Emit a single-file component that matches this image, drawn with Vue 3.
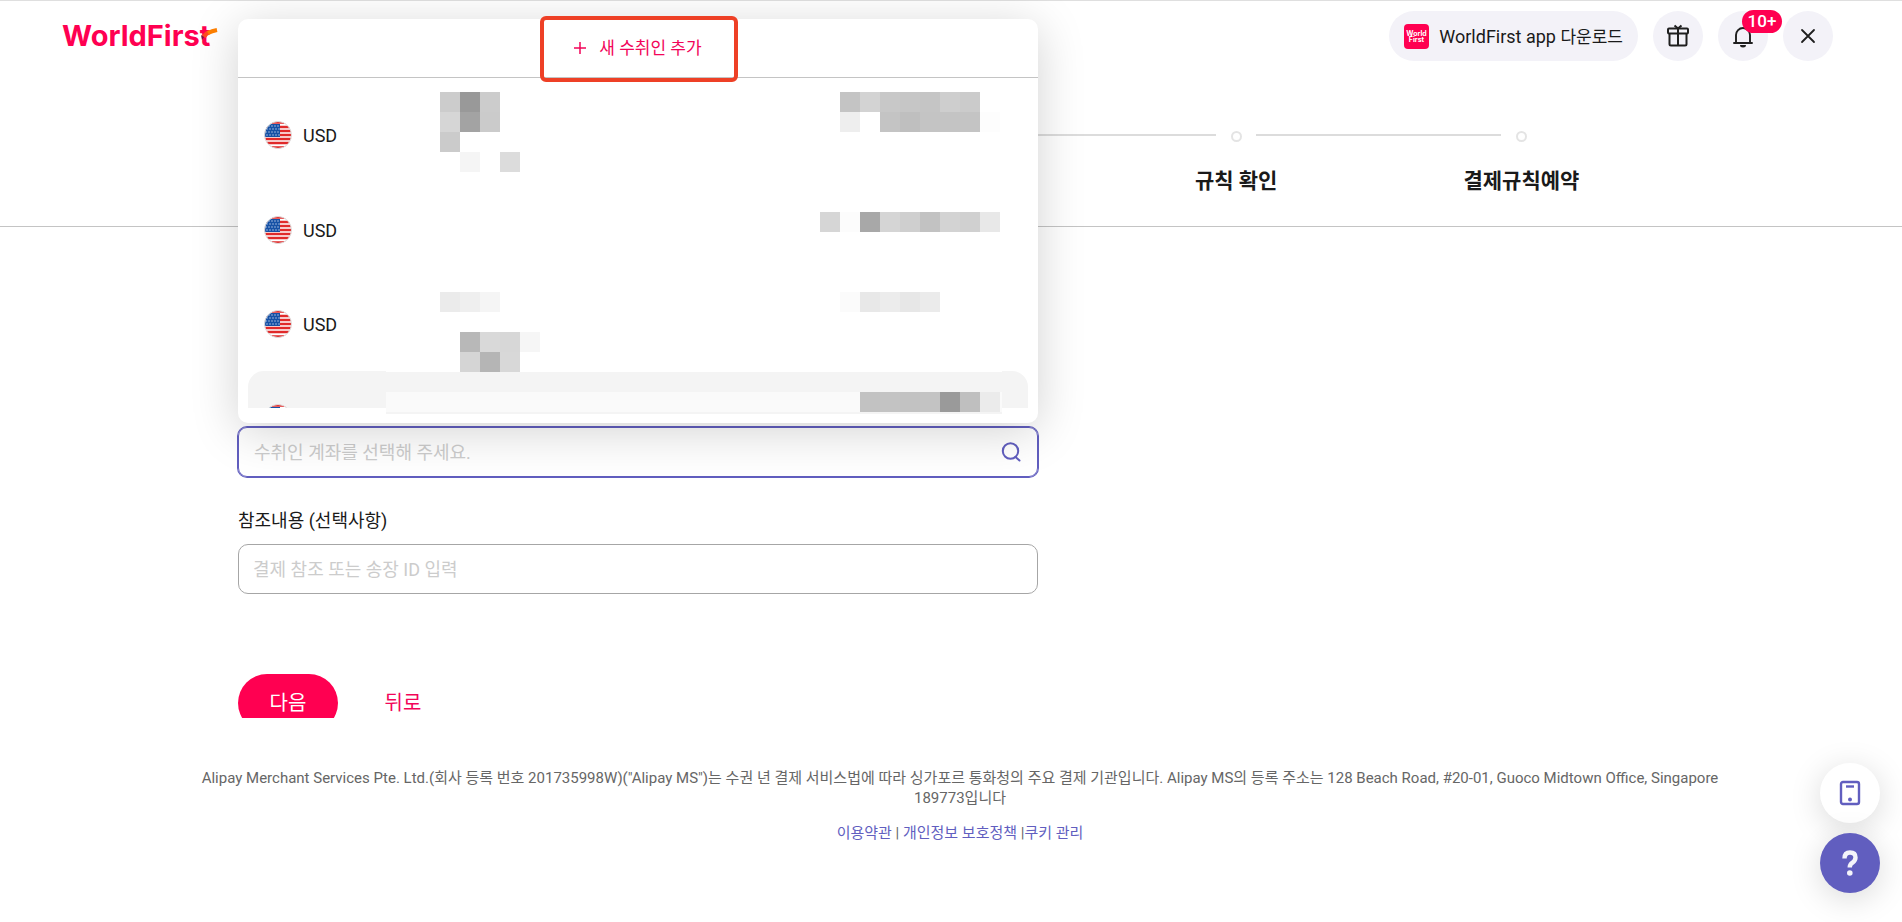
<script setup>
import { ref } from 'vue'

const account = ref('')
const reference = ref('')
const payees = ['USD', 'USD', 'USD', '']

const C = 20
const mask = [
  [440, 92, ['#cccccc', '#999999', '#cccccc']],
  [440, 112, ['#d6d6d6', '#a3a3a3', '#cbcbcb']],
  [440, 132, ['#cbcbcb']],
  [460, 152, ['#f5f5f5', 'none', '#dcdcdc']],
  [840, 92, ['#c4c4c4', '#d3d3d3', '#c8c8c8', '#c6c6c6', '#c5c5c5', '#cecece', '#cbcbcb']],
  [840, 112, ['#eeeeee', 'none', '#c4c4c4', '#bfbfbf', '#c4c4c4', '#c4c4c4', '#c4c4c4', '#fdfdfd']],
  [820, 212, ['#d6d6d6', '#fcfcfc', '#a8a8a8', '#d5d5d5', '#cfcfcf', '#c2c2c2', '#d3d3d3', '#d0d0d0', '#e8e8e8']],
  [440, 292, ['#ebebeb', '#efefef', '#f5f5f5']],
  [840, 292, ['#fbfbfb', '#e8e8e8', '#ececec', '#e7e7e7', '#ebebeb']],
  [460, 332, ['#b8b8b8', '#d9d9d9', '#d7d7d7', '#f6f6f6']],
  [460, 352, ['#d5d5d5', '#b5b5b5', '#d8d8d8']],
  [860, 392, ['#c2c2c2', '#c3c3c3', '#c2c2c2', '#c3c3c3', '#9a9a9a', '#bfbfbf', '#ebebeb']]
]
const cells = mask.flatMap(([x, y, fills]) =>
  fills.map((fill, i) => ({ x: x - 238 + i * C, y: y - 19, fill })).filter((c) => c.fill !== 'none')
)
const stars = [5, 8, 11, 14].flatMap((y, r) => [2, 5, 8, 11, 14].map((x) => ({ x: x + (r % 2), y })))
</script>

<template>
  <div class="page">
    <header class="header">
      <div class="topbar">
        <a class="logo" href="#" aria-label="WorldFirst">
          <svg width="170" height="40" viewBox="0 0 170 40">
            <text class="logo-text" x="0" y="25">WorldFirst</text>
            <path d="M142 16q2-4 6-5" fill="none" stroke="#ff4a20" stroke-width="4" />
            <path d="M146 12q4-2 9-3" fill="none" stroke="#ff8000" stroke-width="4" />
            <path d="M139 14l3 2-2 3z" fill="#7a1048" />
          </svg>
        </a>
        <nav class="tools">
          <button class="download" type="button">
            <svg width="25" height="25" viewBox="0 0 25 25">
              <rect width="25" height="25" rx="4" fill="#ff0051" />
              <text class="app-text" x="12.5" y="12" text-anchor="middle">World</text>
              <text class="app-text" x="12.5" y="18" text-anchor="middle">First</text>
            </svg>
            <span class="download-text">WorldFirst app <span class="ko">다운로드</span></span>
          </button>
          <button class="round" type="button" aria-label="gift">
            <svg width="24" height="24" viewBox="0 0 24 24" fill="none" stroke="#1f1f1f" stroke-width="2" stroke-linejoin="round">
              <rect x="2" y="4.500" width="20" height="5" rx="1" />
              <path d="M3.500 9.500v10.500q0 1.500 1.500 1.500h14q1.500 0 1.500-1.500V9.500M12 4.500v17M12 4.500L8.500 1.500M12 4.500l3.500-3" />
            </svg>
          </button>
          <button class="round" type="button" aria-label="notifications">
            <svg width="22" height="24" viewBox="0 0 22 24" fill="none" stroke="#1f1f1f" stroke-width="1.900">
              <path d="M2 19h18M4 19V11a7 7 0 0 1 14 0v8" stroke-linecap="round" stroke-linejoin="round" />
              <path d="M8 21h6a3 2.500 0 0 1-6 0z" fill="#1f1f1f" stroke="none" />
            </svg>
            <span class="badge">10+</span>
          </button>
          <button class="round" type="button" aria-label="close">
            <svg width="16" height="16" viewBox="0 0 16 16" stroke="#1f1f1f" stroke-width="1.800" stroke-linecap="round">
              <path d="M2 2l12 12M14 2L2 14" />
            </svg>
          </button>
        </nav>
      </div>
      <ol class="steps">
        <li class="step fourth"><span class="dot"></span><span class="title">규칙 확인</span></li>
        <li class="step"><span class="dot"></span><span class="title">결제규칙예약</span></li>
      </ol>
    </header>

    <main class="main">
      <form class="form" @submit.prevent>
        <div class="picker">
          <div class="search">
            <input v-model="account" type="text" aria-label="수취인 계좌" placeholder="수취인 계좌를 선택해 주세요." />
            <svg width="20" height="20" viewBox="0 0 20 20" fill="none" stroke="#615ebf" stroke-width="2" stroke-linecap="round">
              <circle cx="9.500" cy="9" r="7.700" />
              <path d="M14.500 15l4 3.500" />
            </svg>
          </div>
          <div class="dropdown">
            <div class="add-row">
              <button class="add" type="button">
                <svg width="12" height="12" viewBox="0 0 12 12" stroke="#f20559" stroke-width="1.500">
                  <path d="M6 0v12M0 6h12" />
                </svg>
                <span>새 수취인 추가</span>
              </button>
            </div>
            <ul class="list">
              <li v-for="(currency, i) in payees" :key="i" class="payee" :class="{ active: i === 3 }">
                <svg class="flag" width="28" height="28" viewBox="0 0 28 28">
                  <clipPath :id="'f' + i"><circle cx="14" cy="14" r="13.500" /></clipPath>
                  <g :clip-path="'url(#f' + i + ')'">
                    <rect width="28" height="28" fill="#fff" />
                    <path d="M0 1.500h28M0 6h28M0 10h28M0 14h28M0 18h28M0 22h28M0 26.500h28" stroke="#e02a2a" stroke-width="2.300" />
                    <rect y="3" width="16" height="13" fill="#1651a5" />
                    <circle v-for="s in stars" :key="s.x + '-' + s.y" :cx="s.x" :cy="s.y" r=".7" fill="#c5d5ee" />
                  </g>
                  <circle cx="14" cy="14" r="13.500" fill="none" stroke="#dedede" stroke-width="1" />
                </svg>
                <span>{{ currency }}</span>
              </li>
            </ul>
            <svg class="mask" width="800" height="404" viewBox="0 0 800 404" shape-rendering="crispEdges" aria-hidden="true">
              <rect x="148" y="352" width="616" height="1" fill="#fff" />
              <rect x="148" y="373" width="616" height="20" fill="#fafafa" />
              <rect x="148" y="393" width="616" height="2" fill="#f4f4f4" />
              <rect v-for="c in cells" :key="c.x + '-' + c.y" :x="c.x" :y="c.y" :width="C" :height="C" :fill="c.fill" />
            </svg>
            <div class="highlight"></div>
          </div>
        </div>

        <label class="label" for="ref">참조내용 (선택사항)</label>
        <input id="ref" v-model="reference" class="field" type="text" placeholder="결제 참조 또는 송장 ID 입력" />

        <div class="actions">
          <button class="next" type="submit">다음</button>
          <button class="back" type="button">뒤로</button>
        </div>
      </form>
    </main>

    <footer class="footer">
      <p>Alipay Merchant Services Pte. Ltd.(회사 등록 번호 201735998W)("Alipay MS")는 수권 년 결제 서비스법에 따라 싱가포르 통화청의 주요 결제 기관입니다. Alipay MS의 등록 주소는 128 Beach Road, #20-01, Guoco Midtown Office, Singapore 189773입니다</p>
      <p class="links"><a href="#">이용약관</a> | <a href="#">개인정보 보호정책</a> |<a href="#">쿠키 관리</a></p>
    </footer>

    <div class="floats">
      <button class="float" type="button" aria-label="mobile">
        <svg width="22" height="26" viewBox="0 0 22 26">
          <rect x="2" y="2" width="18" height="22" rx="2" fill="none" stroke="#615ebf" stroke-width="2.400" />
          <path d="M7 6.500h8" stroke="#615ebf" stroke-width="2.400" />
          <circle cx="11" cy="19.500" r="2" fill="#615ebf" />
        </svg>
      </button>
      <button class="float help" type="button" aria-label="help">
        <svg width="18" height="28" viewBox="0 0 18 28">
          <path d="M3.500 9.500Q3.500 3.500 9 3.500t5.500 5q0 3-3 5.200Q8.700 15.500 8.700 18.500" fill="none" stroke="#f4f4fa" stroke-width="4.400" />
          <circle cx="8.800" cy="24" r="2.800" fill="#f4f4fa" />
        </svg>
      </button>
    </div>
  </div>
</template>

<style>
body {
  margin: 0;
  background: #fff;
}
</style>

<style scoped>
.page {
  min-height: 100vh;
  box-sizing: border-box;
  border-top: 1px solid #dfdfdf;
  color: #1a1a1a;
  font-family: Roboto, "Noto Sans CJK KR", sans-serif;
  font-size: 18px;
}
button,
input {
  font: inherit;
  color: inherit;
  box-sizing: border-box;
}
button {
  border: 0;
  padding: 0;
  background: none;
  cursor: pointer;
}
.header {
  box-sizing: border-box;
  height: 226px;
  border-bottom: 1px solid #c4c4c4;
}
.topbar {
  display: flex;
  justify-content: space-between;
  height: 60px;
  box-sizing: border-box;
  padding: 10px 69px 0 62px;
}
.logo {
  display: block;
  padding-top: 10px;
}
.logo svg,
button svg,
.flag {
  display: block;
}
.logo-text {
  font: 700 29px Inter, sans-serif;
  fill: #ff0051;
}
.app-text {
  font: 700 7px Inter, sans-serif;
  fill: #fff;
}
.tools {
  display: flex;
  gap: 15px;
}
.download {
  display: flex;
  align-items: center;
  gap: 10px;
  height: 50px;
  padding: 0 15px;
  border-radius: 25px;
  background: #f3f2f8;
}
.download-text {
  padding-bottom: 2px;
}
.ko {
  font-size: 17px;
}
.round {
  position: relative;
  display: flex;
  align-items: center;
  justify-content: center;
  width: 50px;
  height: 50px;
  border-radius: 50%;
  background: #f3f2f8;
}
.badge {
  position: absolute;
  top: -1px;
  left: 24px;
  width: 40px;
  border-radius: 12px;
  background: #ff0051;
  color: #fff;
  font-size: 17px;
  font-weight: 500;
  line-height: 23px;
  text-align: center;
}
.steps {
  display: grid;
  grid-template-columns: repeat(5, 1fr);
  max-width: 1426px;
  margin: 70px auto 0;
  padding: 0;
  list-style: none;
}
.step {
  display: grid;
  grid-template-columns: 1fr 11px 1fr;
  justify-items: center;
  position: relative;
}
.fourth {
  grid-column: 4;
}
.dot {
  grid-column: 2;
  box-sizing: border-box;
  width: 11px;
  height: 11px;
  border: 2px solid #e4e4e4;
  border-radius: 50%;
}
.step::before {
  content: "";
  position: absolute;
  top: 3px;
  right: calc(50% + 20px);
  width: calc(100% - 40px);
  height: 2px;
  background: #dcdcdc;
}
.title {
  grid-column: 1 / -1;
  margin-top: 25px;
  font-size: 21px;
  font-weight: 700;
  line-height: 28px;
}
.main {
  max-width: 1426px;
  margin: 0 auto;
  padding-top: 200px;
}
.form {
  max-width: 800px;
}
.picker {
  position: relative;
}
.search {
  display: flex;
  align-items: center;
  box-sizing: border-box;
  height: 50px;
  padding: 0 16px 0 15px;
  border: 1px solid #615ebf;
  border-radius: 9px;
  box-shadow: 0 0 0 1px #615ebf;
}
.search input {
  flex: 1;
  padding: 0;
  border: 0;
  outline: 0;
  background: none;
}
input::placeholder {
  color: #ccc;
  opacity: 1;
}
.dropdown {
  position: absolute;
  left: 0;
  right: 0;
  bottom: calc(100% + 4px);
  z-index: 2;
  border-radius: 10px;
  background: #fff;
  box-shadow: 0 8px 48px rgba(0, 0, 0, .18);
}
.add-row {
  display: flex;
  justify-content: center;
  border-bottom: 1px solid #c4c4c4;
}
.add {
  display: flex;
  align-items: center;
  gap: 13px;
  height: 58px;
  color: #f20559;
  font-size: 17px;
}
.add span {
  padding-bottom: 4px;
}
.list {
  box-sizing: border-box;
  height: 330px;
  margin: 0 10px 15px;
  padding: 10px 0 0;
  overflow: hidden;
  list-style: none;
}
.payee {
  display: flex;
  align-items: center;
  gap: 11px;
  height: 94px;
  padding-left: 16px;
}
.payee:first-child {
  margin-bottom: 1px;
}
.active {
  border-radius: 16px;
  background: #f4f4f4;
}
.mask {
  position: absolute;
  top: 0;
  left: 0;
}
.highlight {
  position: absolute;
  top: -3px;
  left: 50%;
  width: 198px;
  height: 66px;
  margin-left: -98px;
  box-sizing: border-box;
  border: 4px solid #ee4026;
  border-radius: 6px;
  pointer-events: none;
}
.label {
  display: block;
  margin-top: 30px;
  line-height: 28px;
}
.field {
  display: block;
  width: 100%;
  height: 50px;
  margin-top: 9px;
  padding: 0 14px;
  border: 1px solid #a6a6a6;
  border-radius: 10px;
  background: #fff;
}
.actions {
  display: flex;
  height: 44px;
  margin-top: 80px;
  overflow: hidden;
  font-size: 20px;
}
.next,
.back {
  width: 100px;
  height: 58px;
  padding-bottom: 3px;
  border-radius: 29px;
}
.next {
  background: #ff0051;
  color: #fff;
}
.back {
  margin-left: 15px;
  color: #f20559;
}
.footer {
  max-width: 1560px;
  margin: 0 auto;
  padding: 50px 0 0 18px;
  color: #666;
  font-size: 15px;
  line-height: 20px;
  text-align: center;
}
.footer p {
  margin: 0;
}
.footer .links {
  margin-top: 15px;
}
.links a {
  color: #615ebf;
  text-decoration: none;
}
.floats {
  position: fixed;
  right: 22px;
  bottom: 29px;
  display: flex;
  flex-direction: column;
  gap: 10px;
}
.float {
  display: flex;
  align-items: center;
  justify-content: center;
  width: 60px;
  height: 60px;
  border-radius: 50%;
  background: #fff;
  box-shadow: 0 6px 32px rgba(0, 0, 0, .15);
}
.help {
  background: #615ebf;
}
</style>
